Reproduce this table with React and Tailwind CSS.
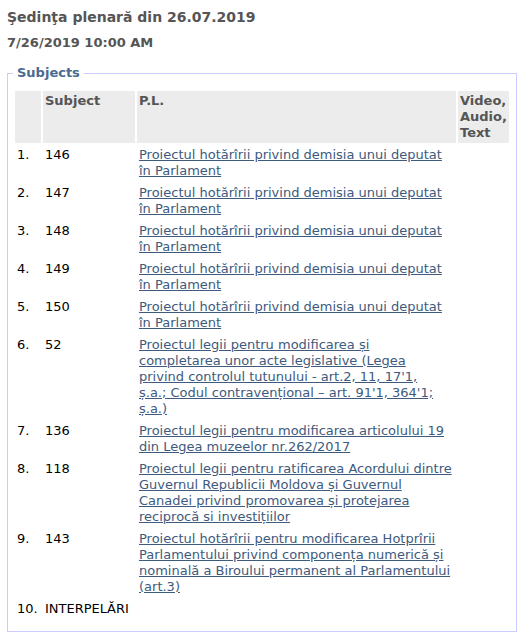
import React from "react";

const rows = [
  ["1.", "146", "Proiectul hotărîrii privind demisia unui deputat în Parlament"],
  ["2.", "147", "Proiectul hotărîrii privind demisia unui deputat în Parlament"],
  ["3.", "148", "Proiectul hotărîrii privind demisia unui deputat în Parlament"],
  ["4.", "149", "Proiectul hotărîrii privind demisia unui deputat în Parlament"],
  ["5.", "150", "Proiectul hotărîrii privind demisia unui deputat în Parlament"],
  ["6.", "52", "Proiectul legii pentru modificarea și completarea unor acte legislative (Legea privind controlul tutunului - art.2, 11, 17'1, ș.a.;\u00a0Codul contravențional – art. 91'1, 364'1; ș.a.)"],
  ["7.", "136", "Proiectul legii pentru modificarea articolului 19 din Legea muzeelor nr.262/2017"],
  ["8.", "118", "Proiectul legii pentru ratificarea Acordului dintre Guvernul Republicii Moldova și Guvernul Canadei privind promovarea și protejarea reciprocă si investițiilor"],
  ["9.", "143", "Proiectul hotărîrii pentru modificarea Hotprîrii Parlamentului privind componența numerică și nominală a Biroului permanent al Parlamentului (art.3)"],
  ["10.", "INTERPELĂRI", ""],
];

export default function App() {
  return (
    <div className="bg-white text-[13px] leading-[16px] text-black" style={{ fontFamily: '"DejaVu Sans", Verdana, sans-serif' }}>
      <div className="px-[7px] pt-[7px]">
        <h1 className="text-[14px] leading-[20px] font-bold text-[#555555]">Şedinţa plenară din 26.07.2019</h1>
        <div className="mt-[8px] text-[13px] leading-[16px] font-bold text-[#555555]">7/26/2019 10:00 AM</div>
      </div>
      <fieldset className="mx-[7px] mt-[14px] border border-[#ccccff] px-[5px] pt-[8px] pb-[10px] min-w-0">
        <legend className="px-[4px] font-bold text-[#4a6a8f]">Subjects</legend>
        <table className="w-full border-separate border-spacing-[2px]">
          <thead>
            <tr className="align-top text-left">
              <th className="w-[26px] bg-[#ececec] p-[2px]"></th>
              <th className="w-[92px] bg-[#ececec] p-[2px] font-bold text-[#555555]">Subject</th>
              <th className="bg-[#ececec] p-[2px] font-bold text-[#555555]">P.L.</th>
              <th className="w-[51px] bg-[#ececec] p-[2px] font-bold text-[#555555]">Video, Audio, Text</th>
            </tr>
          </thead>
          <tbody>
            {rows.map((r, i) => (
              <tr key={i} className="align-top">
                <td className="p-[2px] whitespace-nowrap">{r[0]}</td>
                <td className="p-[2px]">{r[1]}</td>
                <td className="p-[2px]">
                  {r[2] && (
                    <a href="#" className="text-[#3e5a7c] underline">{r[2]}</a>
                  )}
                </td>
                <td className="p-[2px]"></td>
              </tr>
            ))}
          </tbody>
        </table>
      </fieldset>
    </div>
  );
}
